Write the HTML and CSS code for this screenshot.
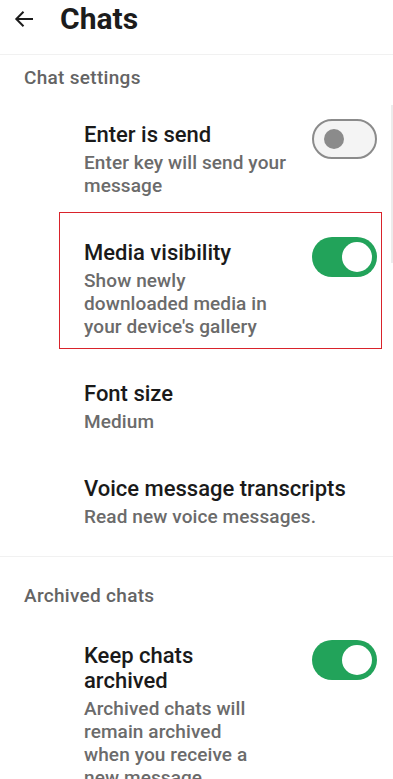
FILE: index.html
```html
<!DOCTYPE html>
<html lang="en">
<head>
<meta charset="utf-8">
<meta name="viewport" content="width=device-width, initial-scale=1">
<title>Chats</title>
<link rel="stylesheet" href="styles.css">
</head>
<body>
<div class="screen">
  <header class="topbar">
    <svg class="back" width="20" height="18" viewBox="0 0 20 18" aria-hidden="true">
      <path d="M19 9H2.5M9.5 1.8L2.3 9l7.2 7.2" fill="none" stroke="#1c1c1c" stroke-width="2"/>
    </svg>
    <h1 class="title">Chats</h1>
  </header>

  <section class="group first">
    <h2 class="group-title">Chat settings</h2>

    <div class="row">
      <div class="text">
        <div class="row-title">Enter is send</div>
        <div class="row-sub">Enter key will send your message</div>
      </div>
      <span class="toggle off"><span class="knob"></span></span>
    </div>

    <div class="row highlighted">
      <div class="text media">
        <div class="row-title">Media visibility</div>
        <div class="row-sub">Show newly downloaded media in your device's gallery</div>
      </div>
      <span class="toggle on"><span class="knob"></span></span>
    </div>

    <div class="row">
      <div class="text">
        <div class="row-title">Font size</div>
        <div class="row-sub">Medium</div>
      </div>
    </div>

    <div class="row last">
      <div class="text wide">
        <div class="row-title">Voice message transcripts</div>
        <div class="row-sub">Read new voice messages.</div>
      </div>
    </div>
  </section>

  <section class="group second">
    <h2 class="group-title">Archived chats</h2>
    <div class="row">
      <div class="text narrow">
        <div class="row-title">Keep chats archived</div>
        <div class="row-sub">Archived chats will remain archived when you receive a new message</div>
      </div>
      <span class="toggle on"><span class="knob"></span></span>
    </div>
  </section>

  <div class="scrollbar"></div>
</div>
</body>
</html>
```
FILE: styles.css
```css
* { box-sizing: border-box; }
html, body {
  margin: 0;
  padding: 0;
  background: #ffffff;
}
body {
  font-family: Roboto, "Noto Sans", "Liberation Sans", sans-serif;
  color: #1c1c1c;
}
.screen {
  position: relative;
  width: 393px;
  height: 779px;
  overflow: hidden;
}
.topbar {
  display: flex;
  align-items: flex-start;
  height: 55px;
  padding-top: 2px;
  border-bottom: 1px solid #f1f1f1;
}
.back {
  margin: 8px 0 0 14px;
  flex: none;
}
.title {
  margin: 0 0 0 26px;
  font-size: 30px;
  line-height: 34px;
  font-weight: 700;
  color: #1c1c1c;
}
.group-title {
  margin: 0;
  padding-left: 24px;
  font-size: 19px;
  line-height: 23px;
  font-weight: 500;
  letter-spacing: 0.3px;
  color: #646464;
}
.group.first { padding-top: 11px; border-bottom: 1px solid #f1f1f1; }
.group.first .group-title { margin-bottom: 12px; }
.group.second { padding-top: 27px; }
.group.second .group-title { margin-bottom: 15px; }

.row {
  position: relative;
  display: flex;
  justify-content: space-between;
  align-items: flex-start;
  padding: 21px 16px 22px 84px;
}
.row.last { padding-bottom: 28px; }
.row.highlighted::after {
  content: "";
  position: absolute;
  left: 59px;
  right: 11px;
  top: -7px;
  bottom: 11px;
  border: 1px solid #d9232b;
  pointer-events: none;
}
.text { width: 212px; }
.text.media { width: 200px; }
.text.wide { width: 292px; }
.text.narrow { width: 180px; }
.row-title {
  font-size: 22px;
  line-height: 25px;
  font-weight: 500;
  color: #1a1a1a;
  margin-bottom: 4px;
}
.row-sub {
  font-size: 19px;
  line-height: 23px;
  font-weight: 500;
  letter-spacing: 0.1px;
  color: #6b6b6b;
}

.toggle {
  flex: none;
  position: relative;
  width: 65px;
  height: 40px;
  border-radius: 20px;
  margin-top: -3px;
}
.toggle .knob {
  position: absolute;
  top: 50%;
  border-radius: 50%;
}
.toggle.off {
  background: #f4f4f4;
  border: 2.5px solid #8b8b8b;
}
.toggle.off .knob {
  left: 10px;
  width: 20px;
  height: 20px;
  margin-top: -10px;
  background: #8b8b8b;
}
.toggle.on {
  background: #22a35a;
}
.toggle.on .knob {
  right: 5px;
  width: 30px;
  height: 30px;
  margin-top: -15px;
  background: #ffffff;
}
.scrollbar {
  position: absolute;
  left: 391px;
  top: 105px;
  width: 2px;
  height: 158px;
  background: #ececec;
}
```
